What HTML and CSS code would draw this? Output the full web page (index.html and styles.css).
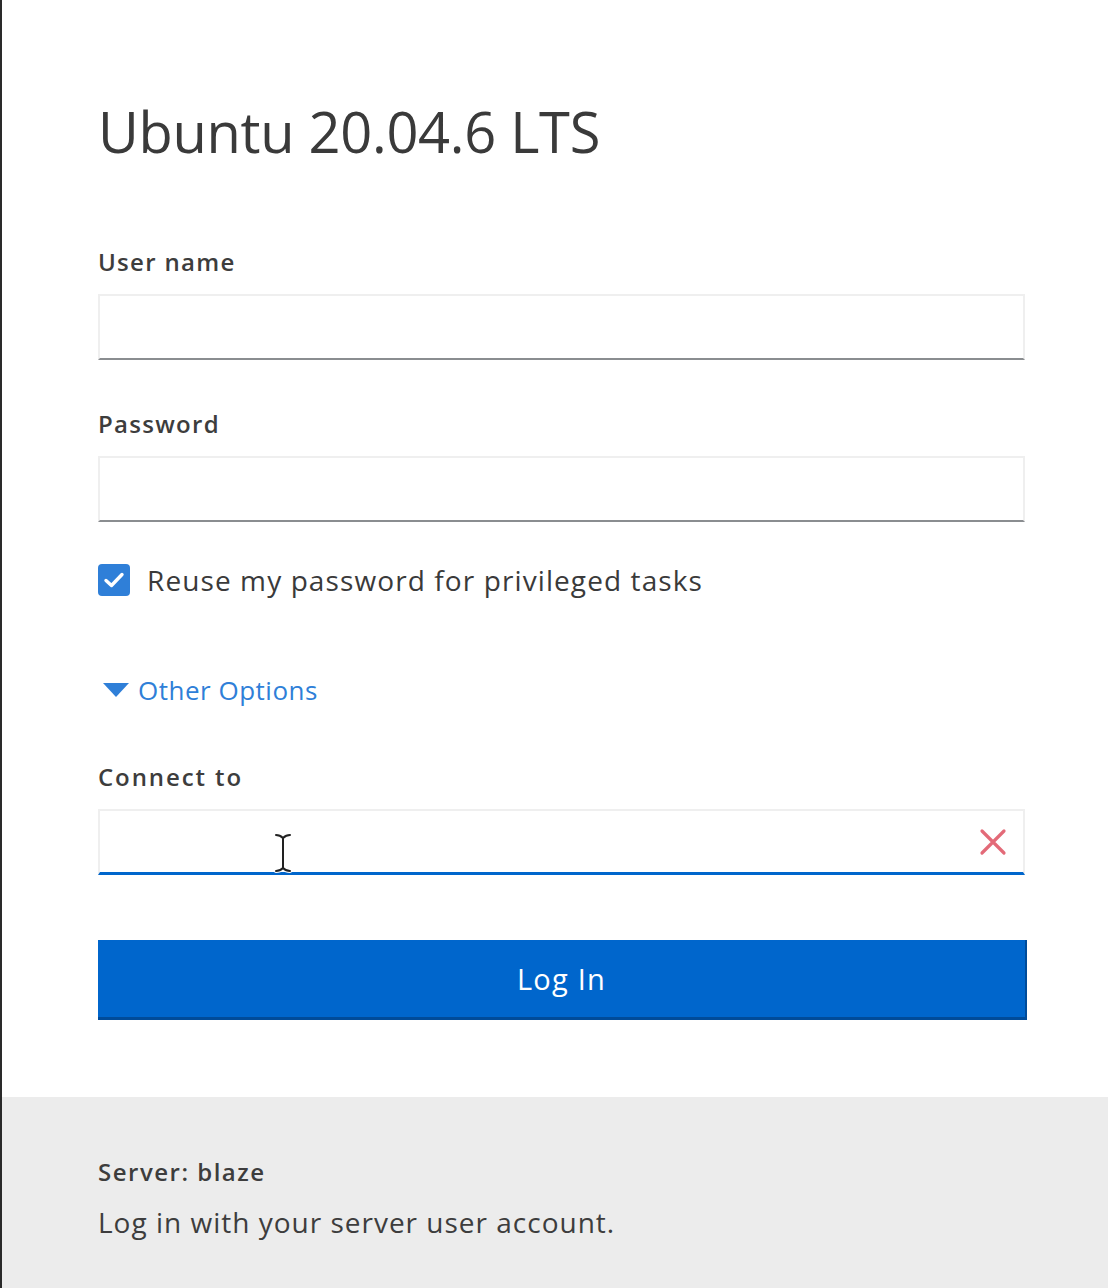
FILE: index.html
```html
<!DOCTYPE html>
<html>
<head>
<meta charset="utf-8">
<link rel="stylesheet" href="styles.css">
</head>
<body>
<div class="page">
  <main class="login">
    <h1 class="title">Ubuntu 20.04.6 LTS</h1>
    <div class="field">
      <label class="label">User name</label>
      <div class="input"></div>
    </div>
    <div class="field">
      <label class="label">Password</label>
      <div class="input"></div>
    </div>
    <div class="check-row">
      <span class="checkbox">
        <svg width="22" height="18" viewBox="0 0 22 18"><path d="M3 9.5 L8.5 14.5 L19 3.5" fill="none" stroke="#fff" stroke-width="3.4" stroke-linecap="round" stroke-linejoin="round"/></svg>
      </span>
      <span class="check-text">Reuse my password for privileged tasks</span>
    </div>
    <div class="options">
      <svg class="caret" width="26" height="14" viewBox="0 0 26 14"><path d="M0 0 H26 L13 14 Z" fill="#2f7fd8"/></svg>
      <span>Other Options</span>
    </div>
    <div class="field connect">
      <label class="label">Connect to</label>
      <div class="input input-active">
        <svg class="clear" width="28" height="28" viewBox="0 0 28 28"><path d="M3 3 L25 25 M25 3 L3 25" stroke="#e36a78" stroke-width="3.2" stroke-linecap="round"/></svg>
        <svg class="ibeam" width="20" height="40" viewBox="0 0 20 40"><path d="M3 2 Q7 2 10 5 Q13 2 17 2 M10 5 V35 M3 38 Q7 38 10 35 Q13 38 17 38" fill="none" stroke="#fff" stroke-width="4" stroke-linecap="round"/><path d="M3 2 Q7 2 10 5 Q13 2 17 2 M10 5 V35 M3 38 Q7 38 10 35 Q13 38 17 38" fill="none" stroke="#222" stroke-width="2" stroke-linecap="round"/></svg>
      </div>
    </div>
    <button class="btn">Log In</button>
  </main>
  <footer class="foot">
    <div class="server">Server: blaze</div>
    <div class="hint">Log in with your server user account.</div>
  </footer>
</div>
</body>
</html>
```
FILE: styles.css
```css
html, body {
  margin: 0;
  padding: 0;
  background: #fff;
}
body {
  font-family: "Open Sans", Lato, sans-serif;
  color: #3a3a3a;
}
.page {
  height: 1288px;
  border-left: 2px solid #2a2a2a;
  display: flex;
  flex-direction: column;
  box-sizing: border-box;
}
.login {
  flex: 1;
  padding: 96px 83px 0 96px;
}
.title {
  margin: 0 0 81px;
  font-weight: 400;
  font-size: 56px;
  line-height: 70px;
  letter-spacing: -0.3px;
  color: #3a3a3a;
}
.field {
  margin-bottom: 49px;
}
.label {
  display: block;
  font-size: 24px;
  font-weight: 600;
  color: #3d3d3d;
  line-height: 30px;
  letter-spacing: 1.3px;
  margin-bottom: 17px;
}
.input {
  position: relative;
  height: 66px;
  box-sizing: border-box;
  border: 2px solid #efefef;
  border-bottom: 2px solid #8a8d90;
  background: #fff;
}
.input-active {
  border-bottom: 3px solid #0066cc;
}
.check-row {
  display: flex;
  align-items: center;
  gap: 17px;
  height: 32px;
  margin-top: -7px;
}
.checkbox {
  width: 32px;
  height: 32px;
  border-radius: 4px;
  background: #2f7fd8;
  display: flex;
  align-items: center;
  justify-content: center;
}
.check-text {
  font-size: 28px;
  line-height: 32px;
  letter-spacing: 1.1px;
  color: #3a3a3a;
}
.options {
  display: flex;
  align-items: center;
  gap: 9px;
  height: 32px;
  margin: 78px 0 56px 5px;
  color: #2f7fd8;
  font-size: 26px;
  letter-spacing: 0.5px;
}
.connect {
  margin-bottom: 0;
}
.connect .label {
  letter-spacing: 1.9px;
}
.clear {
  position: absolute;
  right: 16px;
  top: 17px;
}
.ibeam {
  position: absolute;
  left: 173px;
  top: 22px;
}
.btn {
  display: block;
  width: 100%;
  height: 80px;
  margin-top: 65px;
  border: 0;
  border-bottom: 3px solid #004b99;
  box-shadow: 2px 0 0 #004b99;
  background: #0066cc;
  color: #fff;
  font-family: inherit;
  font-size: 29px;
  letter-spacing: 1.2px;
}
.foot {
  height: 191px;
  background: #ececec;
  padding: 60px 0 0 96px;
  box-sizing: border-box;
}
.server {
  font-size: 24px;
  line-height: 30px;
  font-weight: 600;
  letter-spacing: 1.5px;
  color: #3d3d3d;
}
.hint {
  margin-top: 17px;
  font-size: 28px;
  line-height: 36px;
  letter-spacing: 1px;
  color: #3d3d3d;
}
```
